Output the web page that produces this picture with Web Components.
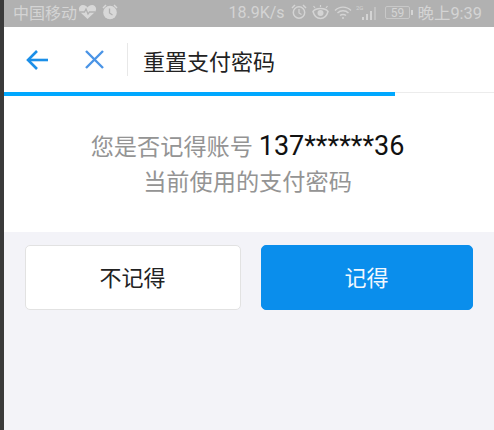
<!DOCTYPE html>
<html lang="zh">
<head>
<meta charset="utf-8">
<title>重置支付密码</title>
<style>
    html, body { margin: 0; height: 100%; background: #3a3a3a; overflow: hidden; }
    body { font-family: "Liberation Sans", "Noto Sans CJK SC", sans-serif; }
</style>
</head>
<body>
<app-shell>
    <status-bar></status-bar>
    <nav-header>重置支付密码</nav-header>
    <progress-line></progress-line>
    <prompt-text account="137******36"></prompt-text>
    <choice-row>
        <choice-button>不记得</choice-button>
        <choice-button primary>记得</choice-button>
    </choice-row>
</app-shell>

<script>
const FONT = '"Roboto", "Noto Sans CJK SC", sans-serif';

class AppShell extends HTMLElement {
    constructor() {
        super();
        this.attachShadow({ mode: 'open' });
        this.shadowRoot.innerHTML = `
            <style>
                :host { display: flex; flex-direction: column; height: 430px; margin-left: 4px; background: #f3f3f8; }
            </style>
            <slot></slot>`;
    }
}

class StatusBar extends HTMLElement {
    constructor() {
        super();
        this.attachShadow({ mode: 'open' });
        this.shadowRoot.innerHTML = `
            <style>
                :host { display: flex; align-items: center; height: 27px; box-sizing: border-box; padding: 0 12px 3px 9px; flex: none;
                        background: #b1b1b1; color: #d4d4d4; font: 16px ${FONT}; white-space: nowrap; }
                .left, .right { display: flex; align-items: center; }
                .right { margin-left: auto; }
                .speed { margin-right: 6px; }
                svg { display: block; flex: none; }
                .time { margin-left: 5px; font-size: 16.4px; }
            </style>
            <div class="left">
                <span>中国移动</span>
                <svg width="19" height="16" viewBox="0 0 19 16" style="margin-left:1px">
                    <path d="M9.5 15 2 8C-.5 5 1.5 1 5 1c2 0 3.5 1 4.5 2.500C10.500 2 12 1 14 1c3.500 0 5.500 4 3 7z" fill="#d8d8d8"/>
                    <path d="M2 8h4.500l1.500-3 2 5 1.500-2h5.500" fill="none" stroke="#b1b1b1" stroke-width="1.300"/>
                </svg>
                <svg width="16" height="16" viewBox="0 0 16 16" style="margin-left:5px">
                    <circle cx="8" cy="8.500" r="6.800" fill="#d8d8d8"/>
                    <path d="M1 4 4 1M15 4l-3-3" stroke="#d8d8d8" stroke-width="1.500"/>
                    <path d="M7.500 4.500v4.500l3 2" fill="none" stroke="#b1b1b1" stroke-width="1.300"/>
                </svg>
            </div>
            <div class="right">
                <span class="speed">18.9K/s</span>
                <svg width="16" height="16" viewBox="0 0 16 16">
                    <circle cx="8" cy="8.500" r="5.700" fill="none" stroke="#d4d4d4" stroke-width="1.500"/>
                    <path d="M1 4 4 1M15 4l-3-3" stroke="#d4d4d4" stroke-width="1.500"/>
                    <path d="M8 5v4l2.500 1.500" fill="none" stroke="#d4d4d4" stroke-width="1.200"/>
                </svg>
                <svg width="17" height="15" viewBox="0 0 17 15" style="margin-left:5px">
                    <path d="M1 6.500C4 2.500 13 2.500 16 6.500 14.500 12 11 13.500 8.500 13.500S2.500 12 1 6.500z" fill="none" stroke="#d4d4d4" stroke-width="1.500"/>
                    <circle cx="8.500" cy="8" r="3" fill="#d4d4d4"/>
                    <path d="M3 3 1.500 1M8.500 2V0M14 3l1.500-2" stroke="#d4d4d4" stroke-width="1.200"/>
                </svg>
                <svg width="18" height="15" viewBox="0 0 18 15" style="margin-left:5px" fill="none" stroke="#d4d4d4" stroke-width="1.400">
                    <path d="M1 5.500c4.500-4.500 11.500-4.500 16 0"/>
                    <path d="M3.500 8c3-3 8-3 11 0"/>
                    <path d="M6 10.500c1.500-1.400 4.500-1.400 6 0"/>
                    <circle cx="9" cy="13" r="1" fill="#d4d4d4" stroke="none"/>
                </svg>
                <svg width="21" height="17" viewBox="0 0 21 17" style="margin-left:4px" fill="#d4d4d4">
                    <text x="0" y="6" font-size="6" font-family="Roboto, sans-serif">2G</text>
                    <rect x="6" y="13" width="2" height="3"/>
                    <rect x="10" y="10" width="2" height="6"/>
                    <rect x="14" y="7" width="2" height="9"/>
                    <rect x="18" y="3" width="2" height="13" fill="#c2c2c2"/>
                </svg>
                <svg width="28" height="13" viewBox="0 0 28 13" style="margin-left:8px">
                    <rect x=".5" y=".5" width="24" height="12" rx="1.500" fill="none" stroke="#c8c8c8"/>
                    <rect x="26" y="4" width="2" height="5" fill="#d4d4d4"/>
                    <text x="12.500" y="10.500" text-anchor="middle" font-size="12" fill="#d4d4d4" font-family="Roboto, sans-serif">59</text>
                </svg>
                <span class="time">晚上9:39</span>
            </div>`;
    }
}

class NavHeader extends HTMLElement {
    constructor() {
        super();
        this.attachShadow({ mode: 'open' });
        this.shadowRoot.innerHTML = `
            <style>
                :host { display: flex; align-items: center; height: 65px; flex: none; background: #fff; box-sizing: border-box;
                        padding-left: 22px; color: #222; font: 22px ${FONT}; }
                svg { display: block; flex: none; }
                .close { margin-left: 36px; }
                .rule { width: 1px; height: 33px; margin: 0 15px 0 22px; background: #e8e8e8; }
            </style>
            <svg width="22" height="22" viewBox="0 0 22 22" fill="none" stroke="#1b8fe8" stroke-width="2.600">
                <path d="M22 11H2"/>
                <path d="M11 2 2 11l9 9"/>
            </svg>
            <svg class="close" width="21" height="21" viewBox="0 0 21 21" fill="none" stroke="#4a94e6" stroke-width="2.400">
                <path d="M2 2l17 17M19 2 2 19"/>
            </svg>
            <div class="rule"></div>
            <slot></slot>`;
    }
}

class ProgressLine extends HTMLElement {
    constructor() {
        super();
        this.attachShadow({ mode: 'open' });
        this.shadowRoot.innerHTML = `
            <style>
                :host { display: block; height: 4px; flex: none; background: linear-gradient(#ececec 1px, #fff 1px); }
                .fill { width: 391px; height: 100%; background: #00a8ff; }
            </style>
            <div class="fill"></div>`;
    }
}

class PromptText extends HTMLElement {
    constructor() {
        super();
        this.attachShadow({ mode: 'open' });
        const account = this.getAttribute('account');
        this.shadowRoot.innerHTML = `
            <style>
                :host { display: block; flex: none; height: 136px; box-sizing: border-box; padding: 33px 3px 0 0; background: #fff;
                        text-align: center; color: #949494; font: 23.2px/35px ${FONT}; }
                b { font-weight: 400; color: #111; font-size: 27px; }
            </style>
            <div>您是否记得账号 <b>${account}</b></div>
            <div>当前使用的支付密码</div>`;
    }
}

class ChoiceRow extends HTMLElement {
    constructor() {
        super();
        this.attachShadow({ mode: 'open' });
        this.shadowRoot.innerHTML = `
            <style>
                :host { display: grid; grid-template-columns: 216px 212px; column-gap: 20px; padding: 13px 0 0 21px; }
            </style>
            <slot></slot>`;
    }
}

class ChoiceButton extends HTMLElement {
    constructor() {
        super();
        this.attachShadow({ mode: 'open' });
        this.shadowRoot.innerHTML = `
            <style>
                :host { display: flex; align-items: center; justify-content: center; height: 65px; box-sizing: border-box; padding: 0 1px 3px 0;
                        background: #fff; border: 1px solid #e2e2e2; border-radius: 5px; color: #222; font: 22px ${FONT}; }
                :host([primary]) { background: #0a8eec; border-color: #0a8eec; color: #f2f8fe; }
            </style>
            <slot></slot>`;
    }
}

customElements.define('app-shell', AppShell);
customElements.define('status-bar', StatusBar);
customElements.define('nav-header', NavHeader);
customElements.define('progress-line', ProgressLine);
customElements.define('prompt-text', PromptText);
customElements.define('choice-row', ChoiceRow);
customElements.define('choice-button', ChoiceButton);
</script>
</body>
</html>
